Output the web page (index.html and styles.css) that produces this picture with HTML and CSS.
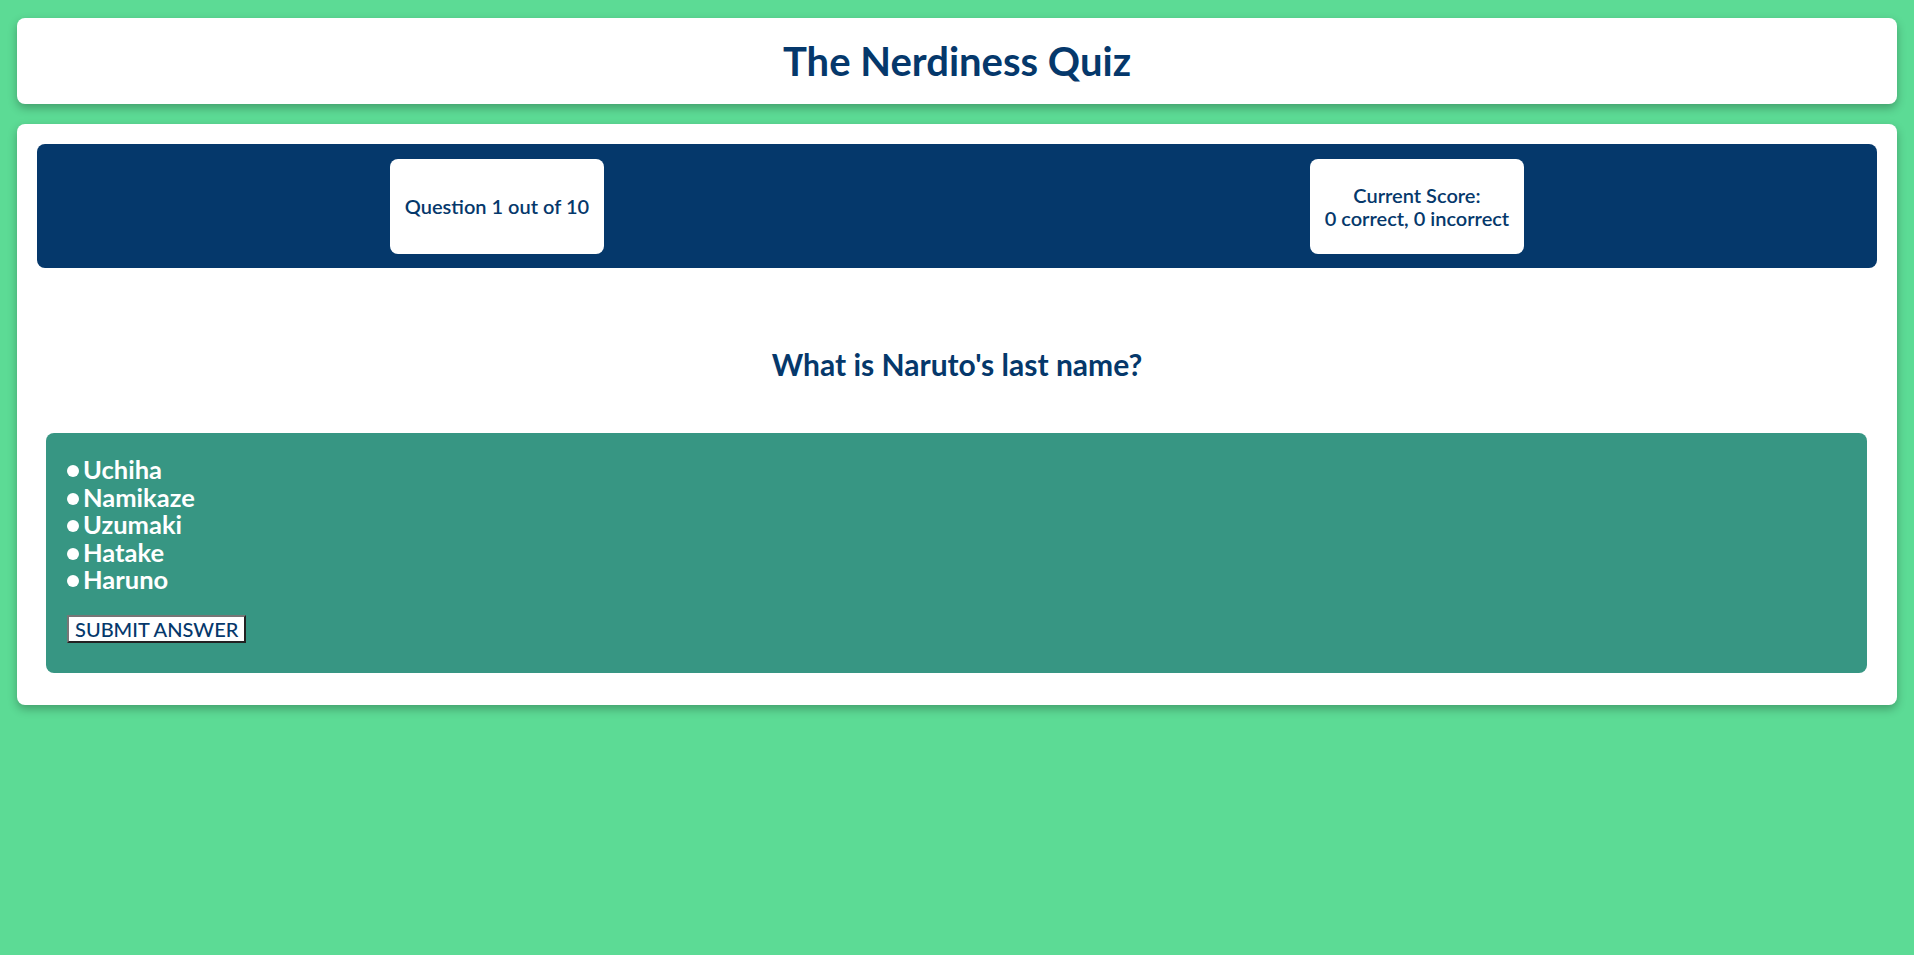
FILE: index.html
```html
<!DOCTYPE html>
<html lang="en">
<head>
<meta charset="utf-8">
<title>The Nerdiness Quiz</title>
<link rel="stylesheet" href="styles.css">
</head>
<body>
  <header class="card header">
    <h1 class="title">The Nerdiness Quiz</h1>
  </header>
  <main class="card quiz">
    <section class="status">
      <div class="status-box">Question 1 out of 10</div>
      <div class="status-box">Current Score:<br>0 correct, 0 incorrect</div>
    </section>
    <h2 class="question">What is Naruto's last name?</h2>
    <form class="answers">
      <ul class="options">
        <li class="option"><span class="dot"></span>Uchiha</li>
        <li class="option"><span class="dot"></span>Namikaze</li>
        <li class="option"><span class="dot"></span>Uzumaki</li>
        <li class="option"><span class="dot"></span>Hatake</li>
        <li class="option"><span class="dot"></span>Haruno</li>
      </ul>
      <button type="button" class="submit">SUBMIT ANSWER</button>
    </form>
  </main>
</body>
</html>
```

FILE: styles.css
```css
* { box-sizing: border-box; }

body {
  margin: 0;
  padding: 18px 17px;
  background: #5cdb95;
  font-family: Lato, "Open Sans", sans-serif;
  color: #05386b;
  min-height: 955px;
}

.card {
  background: #fff;
  border-radius: 8px;
  box-shadow: 0 4px 10px rgba(0, 0, 0, 0.28);
}

.header {
  height: 86px;
  display: flex;
  align-items: center;
  justify-content: center;
  margin-bottom: 20px;
}

.title {
  margin: 0;
  font-size: 40px;
  font-weight: 700;
  line-height: 1.2;
}

.quiz {
  padding: 20px;
}

.status {
  background: #05386b;
  border-radius: 8px;
  padding: 15px 0 14px;
  display: flex;
  justify-content: space-around;
}

.status-box {
  background: #fff;
  border-radius: 8px;
  padding: 0 15px;
  height: 95px;
  display: flex;
  align-items: center;
  text-align: center;
  font-size: 20px;
  font-weight: 600;
  line-height: 23px;
}

.question {
  margin: 0;
  padding: 78px 0 50px;
  text-align: center;
  font-size: 30px;
  font-weight: 700;
  line-height: 37px;
}

.answers {
  background: #379683;
  border-radius: 8px;
  margin: 0 10px 12px 9px;
  padding: 23px 21px 30px;
}

.options {
  list-style: none;
  margin: 0 0 21px;
  padding: 0;
}

.option {
  display: flex;
  align-items: center;
  gap: 4px;
  color: #fff;
  font-size: 25.5px;
  font-weight: 700;
  line-height: 27.5px;
}

.dot {
  width: 12px;
  height: 12px;
  border-radius: 50%;
  background: #fff;
  margin-top: 3px;
  flex: none;
}

.submit {
  display: block;
  height: 28px;
  padding: 0 6px;
  background: #fff;
  color: #05386b;
  font-family: Lato, "Open Sans", sans-serif;
  font-size: 20px;
  font-weight: 500;
  line-height: 24px;
  border: 2px solid;
  border-color: #767676 #222 #222 #767676;
  border-radius: 0;
}
```
